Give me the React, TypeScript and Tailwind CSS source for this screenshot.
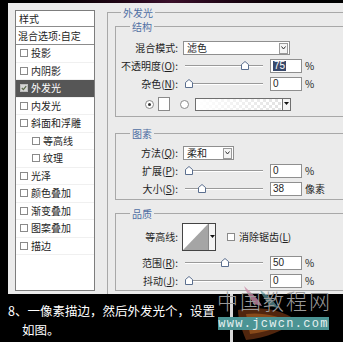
import React from 'react';

const cjk = "font-['Noto_Sans_CJK_SC',sans-serif]";

const Check: React.FC<{ checked?: boolean; dark?: boolean }> = ({ checked, dark }) => (
  <span
    className={`w-[8px] h-[8px] shrink-0 border flex items-center justify-center ${
      dark ? 'border-[#bdbdbd] bg-[#d6d6d6]' : 'border-[#8a8a8a] bg-white'
    }`}
  >
    {checked && (
      <svg width="6" height="6" viewBox="0 0 6 6">
        <path d="M0.8 3 L2.4 4.6 L5.2 1.2" fill="none" stroke="#5a6a4a" strokeWidth="1.2" />
      </svg>
    )}
  </span>
);

const Radio: React.FC<{ on?: boolean }> = ({ on }) => (
  <span className="w-[9px] h-[9px] rounded-full border border-[#8a8a8a] bg-white shrink-0 flex items-center justify-center">
    {on && <span className="w-[3px] h-[3px] rounded-full bg-[#333]" />}
  </span>
);

const Mn: React.FC<{ c: string }> = ({ c }) => <span className="underline">{c}</span>;

const Label: React.FC<{ children: React.ReactNode }> = ({ children }) => (
  <span className="w-[62px] shrink-0 text-right whitespace-nowrap">{children}</span>
);

const Thumb = () => (
  <svg width="8" height="9" viewBox="0 0 8 9">
    <path d="M0.5 8.5 L0.5 3.5 L4 0.5 L7.5 3.5 L7.5 8.5 Z" fill="#fff" stroke="#5b6f8f" />
  </svg>
);

const Slider: React.FC<{ pos: number }> = ({ pos }) => (
  <div className="relative ml-[2px] w-[78px] h-[12px] flex items-center">
    <div className="w-full h-[2px] border-t border-[#9a9a9a] border-b border-b-white" />
    <div className="absolute top-[1px]" style={{ left: pos - 4 }}>
      <Thumb />
    </div>
  </div>
);

const Field: React.FC<{ value: string; sel?: boolean }> = ({ value, sel }) => (
  <div className="ml-[7px] w-[32px] h-[14px] border border-[#8f8f8f] bg-white flex items-center pl-[2px] text-[10px] font-['Liberation_Sans',sans-serif]">
    <span className={sel ? 'bg-[#38486a] text-white px-[1px]' : ''}>{value}</span>
  </div>
);

const Unit: React.FC<{ children: React.ReactNode }> = ({ children }) => (
  <span className="ml-[3px]">{children}</span>
);

const Arrow = () => (
  <span className="w-[9px] h-[11px] border border-[#9a9a9a] bg-[#f4f4f4] flex items-center justify-center shrink-0">
    <svg width="5" height="4" viewBox="0 0 5 4">
      <path d="M0.5 0.5 L2.5 3 L4.5 0.5" fill="none" stroke="#333" />
    </svg>
  </span>
);

const Select: React.FC<{ value: string; w: string }> = ({ value, w }) => (
  <div className={`${w} h-[14px] border border-[#8f8f8f] bg-white flex items-center justify-between pl-[3px] pr-[1px]`}>
    <span>{value}</span>
    <Arrow />
  </div>
);

const Group: React.FC<{ title: string; className?: string; titleClass?: string; children: React.ReactNode }> = ({
  title,
  className,
  titleClass,
  children,
}) => (
  <div className={`border-t border-l border-b border-[#a8a8a8] ${className ?? ''}`}>
    <div className={`-mt-[7px] w-fit px-[2px] bg-[#ebebeb] leading-[14px] text-[#4f6fa3] ${titleClass ?? 'ml-[14px]'}`}>
      {title}
    </div>
    {children}
  </div>
);

const Row: React.FC<{ children: React.ReactNode; h?: string }> = ({ children, h = 'h-[18px]' }) => (
  <div className={`${h} flex items-center`}>{children}</div>
);

const items: { label: string; sub?: boolean; active?: boolean }[] = [
  { label: '投影' },
  { label: '内阴影' },
  { label: '外发光', active: true },
  { label: '内发光' },
  { label: '斜面和浮雕' },
  { label: '等高线', sub: true },
  { label: '纹理', sub: true },
  { label: '光泽' },
  { label: '颜色叠加' },
  { label: '渐变叠加' },
  { label: '图案叠加' },
  { label: '描边' },
];

const StyleList = () => (
  <div className="w-[80px] h-[281px] border border-[#7d7d7d] bg-white flex flex-col">
    <div className="h-[16px] border-b border-[#8c8c8c] pl-[3px] flex items-center">样式</div>
    <div className="h-[18px] border-b border-[#8c8c8c] pl-[2px] flex items-center whitespace-nowrap">
      混合选项:自定
    </div>
    {items.map((it) => (
      <div
        key={it.label}
        className={`h-[17.5px] flex items-center gap-[3px] border-b border-[#f0f0f0] whitespace-nowrap ${
          it.sub ? 'pl-[16px]' : 'pl-[4px]'
        } ${it.active ? 'bg-[#565656] text-white' : ''}`}
      >
        <Check checked={it.active} dark={it.active} />
        <span>{it.label}</span>
      </div>
    ))}
  </div>
);

const Gradient = () => (
  <div className="w-[96px] h-[13px] border border-[#6f6f6f] bg-white flex items-center justify-end">
    <svg width="84" height="11" viewBox="0 0 84 11" className="flex-1">
      <defs>
        <pattern id="chk" width="6" height="6" patternUnits="userSpaceOnUse">
          <rect width="6" height="6" fill="#fff" />
          <rect width="3" height="3" fill="#e2e2e2" />
          <rect x="3" y="3" width="3" height="3" fill="#e2e2e2" />
        </pattern>
        <linearGradient id="fade" x1="0" x2="1">
          <stop offset="0" stopColor="#fff" stopOpacity="1" />
          <stop offset="1" stopColor="#fff" stopOpacity="0" />
        </linearGradient>
      </defs>
      <rect width="84" height="11" fill="url(#chk)" />
      <rect width="84" height="11" fill="url(#fade)" />
    </svg>
    <span className="w-[8px] h-[11px] bg-[#f4f4f4] border-l border-[#6f6f6f] flex items-center justify-center">
      <svg width="5" height="4" viewBox="0 0 5 4">
        <path d="M0 0 L5 0 L2.5 3 Z" fill="#111" />
      </svg>
    </span>
  </div>
);

const Contour = () => (
  <div className="w-[34px] h-[28px] border border-[#444] bg-white flex">
    <svg width="25" height="26" viewBox="0 0 25 26">
      <path d="M0 26 L25 0 L25 26 Z" fill="#a5a5a5" />
    </svg>
    <span className="flex-1 border-l border-[#888] bg-[#f4f4f4] flex items-center justify-center">
      <svg width="5" height="4" viewBox="0 0 5 4">
        <path d="M0 0 L5 0 L2.5 3 Z" fill="#111" />
      </svg>
    </span>
  </div>
);

const OuterGlow = () => (
  <div className="mt-[9px] ml-[12px] flex-1">
    <Group title="外发光" titleClass="ml-[13px]" className="border-b-0 h-[290px]">
      <Group title="结构" className="mt-[6px] ml-[7px]">
        <div className="pt-[5px] pb-[3px]">
          <Row>
            <Label>混合模式:</Label>
            <div className="ml-[5px]">
              <Select value="滤色" w="w-[107px]" />
            </div>
          </Row>
          <Row>
            <Label>
              不透明度(<Mn c="O" />):
            </Label>
            <div className="ml-[5px] flex items-center">
              <Slider pos={60} />
              <Field value="75" sel />
              <Unit>%</Unit>
            </div>
          </Row>
          <Row>
            <Label>
              杂色(<Mn c="N" />):
            </Label>
            <div className="ml-[5px] flex items-center">
              <Slider pos={4} />
              <Field value="0" />
              <Unit>%</Unit>
            </div>
          </Row>
          <div className="mt-[2px] h-[18px] flex items-center pl-[29px]">
            <Radio on />
            <span className="ml-[4px] w-[12px] h-[14px] border border-[#8a8a8a] bg-white" />
            <span className="ml-[10px]">
              <Radio />
            </span>
            <span className="ml-[6px]">
              <Gradient />
            </span>
          </div>
        </div>
      </Group>

      <Group title="图素" className="mt-[16px] ml-[7px]">
        <div className="pt-[3px] pb-[1px]">
          <Row>
            <Label>
              方法(<Mn c="Q" />):
            </Label>
            <div className="ml-[5px]">
              <Select value="柔和" w="w-[51px]" />
            </div>
          </Row>
          <Row>
            <Label>
              扩展(<Mn c="P" />):
            </Label>
            <div className="ml-[5px] flex items-center">
              <Slider pos={4} />
              <Field value="0" />
              <Unit>%</Unit>
            </div>
          </Row>
          <Row>
            <Label>
              大小(<Mn c="S" />):
            </Label>
            <div className="ml-[5px] flex items-center">
              <Slider pos={17} />
              <Field value="38" />
              <Unit>像素</Unit>
            </div>
          </Row>
        </div>
      </Group>

      <Group title="品质" className="mt-[13px] ml-[7px]">
        <div className="pt-[1px]">
          <Row h="h-[30px]">
            <Label>等高线:</Label>
            <div className="ml-[4px]">
              <Contour />
            </div>
            <span className="ml-[11px]">
              <Check />
            </span>
            <span className="ml-[4px]">
              消除锯齿(<Mn c="L" />)
            </span>
          </Row>
          <div className="h-[2px]" />
          <Row>
            <Label>
              范围(<Mn c="R" />):
            </Label>
            <div className="ml-[5px] flex items-center">
              <Slider pos={40} />
              <Field value="50" />
              <Unit>%</Unit>
            </div>
          </Row>
          <Row>
            <Label>
              抖动(<Mn c="J" />):
            </Label>
            <div className="ml-[5px] flex items-center">
              <Slider pos={4} />
              <Field value="0" />
              <Unit>%</Unit>
            </div>
          </Row>
        </div>
      </Group>
    </Group>
  </div>
);

export default function App() {
  return (
    <div className={`relative w-[343px] h-[342px] overflow-hidden bg-black ${cjk}`}>
      <div className="h-[3px] bg-linear-to-r from-black via-[#3a0f2a] to-black" />
      <div className="ml-[8px] h-[291px] bg-[#ebebeb] flex text-[10px] leading-none text-[#1e1e1e] overflow-hidden">
        <div className="pl-[7px] pt-[7px]">
          <StyleList />
        </div>
        <OuterGlow />
      </div>
      <div className="pl-[8px] pt-[7px] text-[12.5px] leading-[19px] text-white">
        <div>8、一像素描边，然后外发光个，设置</div>
        <div className="pl-[14px]">如图。</div>
      </div>

      {/* watermark over the bottom right */}
      <div className="absolute left-[230px] top-[294px] w-[3px] h-[48px] bg-[#d8d8d8]" />
      <svg className="absolute left-[236px] top-[280px]" width="80" height="62" viewBox="0 0 80 62">
        <path d="M8 6 C14 12 22 18 26 26 L18 24 C14 18 10 12 8 6 Z" fill="#c98aa6" opacity="0.8" />
        <path d="M24 10 C30 14 38 20 42 28 L34 26 C30 20 26 16 24 10 Z" fill="#5f9aa0" opacity="0.7" />
        <path d="M2 30 C20 26 44 28 60 40 C50 50 30 58 10 60 C6 50 2 40 2 30 Z" fill="#5a2a10" opacity="0.9" />
        <path d="M10 34 C26 32 44 36 54 42 C44 48 28 52 14 54 Z" fill="#a05a20" opacity="0.7" />
      </svg>
      <div className="absolute left-[217px] top-[289px] text-[21px] leading-[22px] tracking-[2px] text-[#9a9a9a] font-light">
        中国教程网
      </div>
      <div className="absolute left-[218px] top-[317px] w-[111px] h-[13px] bg-[#4b9494] flex items-center justify-center font-['Liberation_Mono',monospace] text-[12px] tracking-[1.3px] text-[#e6f0f0]">
        www.jcwcn.com
      </div>
    </div>
  );
}
